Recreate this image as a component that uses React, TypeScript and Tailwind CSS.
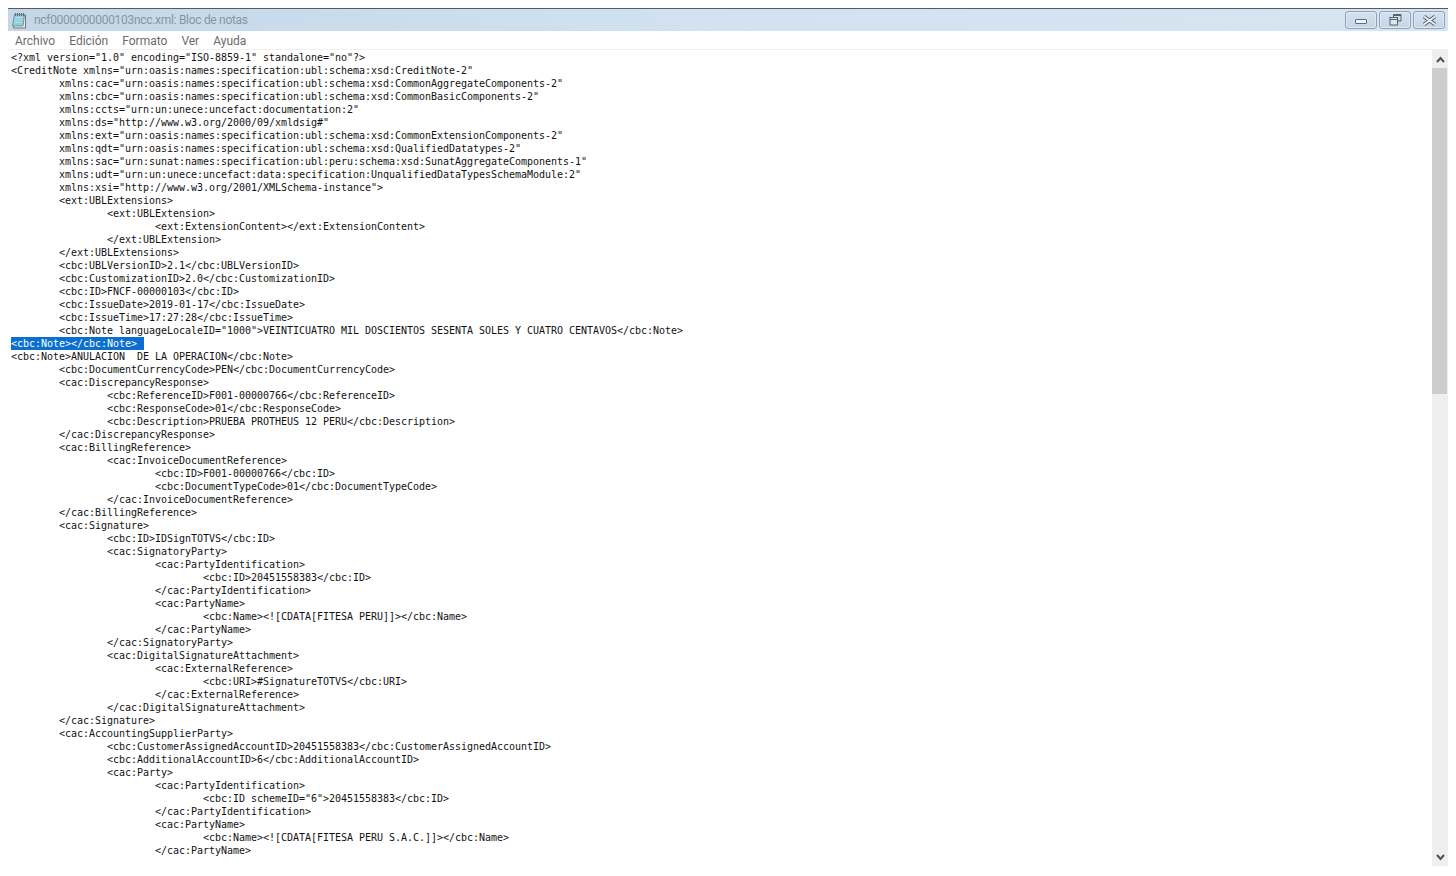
const lines = [
  '<?xml version="1.0" encoding="ISO-8859-1" standalone="no"?>',
  '<CreditNote xmlns="urn:oasis:names:specification:ubl:schema:xsd:CreditNote-2"',
  '\txmlns:cac="urn:oasis:names:specification:ubl:schema:xsd:CommonAggregateComponents-2"',
  '\txmlns:cbc="urn:oasis:names:specification:ubl:schema:xsd:CommonBasicComponents-2"',
  '\txmlns:ccts="urn:un:unece:uncefact:documentation:2"',
  '\txmlns:ds="http://www.w3.org/2000/09/xmldsig#"',
  '\txmlns:ext="urn:oasis:names:specification:ubl:schema:xsd:CommonExtensionComponents-2"',
  '\txmlns:qdt="urn:oasis:names:specification:ubl:schema:xsd:QualifiedDatatypes-2"',
  '\txmlns:sac="urn:sunat:names:specification:ubl:peru:schema:xsd:SunatAggregateComponents-1"',
  '\txmlns:udt="urn:un:unece:uncefact:data:specification:UnqualifiedDataTypesSchemaModule:2"',
  '\txmlns:xsi="http://www.w3.org/2001/XMLSchema-instance">',
  '\t<ext:UBLExtensions>',
  '\t\t<ext:UBLExtension>',
  '\t\t\t<ext:ExtensionContent></ext:ExtensionContent>',
  '\t\t</ext:UBLExtension>',
  '\t</ext:UBLExtensions>',
  '\t<cbc:UBLVersionID>2.1</cbc:UBLVersionID>',
  '\t<cbc:CustomizationID>2.0</cbc:CustomizationID>',
  '\t<cbc:ID>FNCF-00000103</cbc:ID>',
  '\t<cbc:IssueDate>2019-01-17</cbc:IssueDate>',
  '\t<cbc:IssueTime>17:27:28</cbc:IssueTime>',
  '\t<cbc:Note languageLocaleID="1000">VEINTICUATRO MIL DOSCIENTOS SESENTA SOLES Y CUATRO CENTAVOS</cbc:Note>',
  'SELECTED',
  '<cbc:Note>ANULACION  DE LA OPERACION</cbc:Note>',
  '\t<cbc:DocumentCurrencyCode>PEN</cbc:DocumentCurrencyCode>',
  '\t<cac:DiscrepancyResponse>',
  '\t\t<cbc:ReferenceID>F001-00000766</cbc:ReferenceID>',
  '\t\t<cbc:ResponseCode>01</cbc:ResponseCode>',
  '\t\t<cbc:Description>PRUEBA PROTHEUS 12 PERU</cbc:Description>',
  '\t</cac:DiscrepancyResponse>',
  '\t<cac:BillingReference>',
  '\t\t<cac:InvoiceDocumentReference>',
  '\t\t\t<cbc:ID>F001-00000766</cbc:ID>',
  '\t\t\t<cbc:DocumentTypeCode>01</cbc:DocumentTypeCode>',
  '\t\t</cac:InvoiceDocumentReference>',
  '\t</cac:BillingReference>',
  '\t<cac:Signature>',
  '\t\t<cbc:ID>IDSignTOTVS</cbc:ID>',
  '\t\t<cac:SignatoryParty>',
  '\t\t\t<cac:PartyIdentification>',
  '\t\t\t\t<cbc:ID>20451558383</cbc:ID>',
  '\t\t\t</cac:PartyIdentification>',
  '\t\t\t<cac:PartyName>',
  '\t\t\t\t<cbc:Name><![CDATA[FITESA PERU]]></cbc:Name>',
  '\t\t\t</cac:PartyName>',
  '\t\t</cac:SignatoryParty>',
  '\t\t<cac:DigitalSignatureAttachment>',
  '\t\t\t<cac:ExternalReference>',
  '\t\t\t\t<cbc:URI>#SignatureTOTVS</cbc:URI>',
  '\t\t\t</cac:ExternalReference>',
  '\t\t</cac:DigitalSignatureAttachment>',
  '\t</cac:Signature>',
  '\t<cac:AccountingSupplierParty>',
  '\t\t<cbc:CustomerAssignedAccountID>20451558383</cbc:CustomerAssignedAccountID>',
  '\t\t<cbc:AdditionalAccountID>6</cbc:AdditionalAccountID>',
  '\t\t<cac:Party>',
  '\t\t\t<cac:PartyIdentification>',
  '\t\t\t\t<cbc:ID schemeID="6">20451558383</cbc:ID>',
  '\t\t\t</cac:PartyIdentification>',
  '\t\t\t<cac:PartyName>',
  '\t\t\t\t<cbc:Name><![CDATA[FITESA PERU S.A.C.]]></cbc:Name>',
  '\t\t\t</cac:PartyName>',
]

const menu = ['Archivo', 'Edición', 'Formato', 'Ver', 'Ayuda']

function NotepadIcon() {
  return (
    <svg width="17" height="17" viewBox="0 0 17 17" className="shrink-0">
      <path d="M5 3h10.5v13H3.5z" fill="#f4f1dc" stroke="#77736a" />
      <path d="M4.5 2.5h10l-1.5 11.5H2.5z" fill="#8fcbd8" stroke="#6c9aa8" />
      <path d="M5 5.5h8M4.5 8h8M4.2 10.5h8" stroke="#b8e2ea" />
      <path d="M5.5 1v3M7.5 1v3M9.5 1v3M11.5 1v3M13.5 1v3" stroke="#5f6c74" />
    </svg>
  )
}

function CaptionButton({ children }: { children: React.ReactNode }) {
  return (
    <div className="flex h-[18px] w-[32px] items-center justify-center rounded-[3px] border border-[#8ea3b7] bg-gradient-to-b from-[#d4e2ee] to-[#c4d6e7] shadow-[inset_0_0_0_1px_#dfe9f2]">
      {children}
    </div>
  )
}

export default function App() {
  return (
    <div className="h-[876px] w-[1456px] overflow-hidden bg-white px-2 pt-2">
      <div className="flex h-[858px] flex-col">
        <div className="flex h-[23px] shrink-0 items-center justify-between border-t border-[#555b60] bg-gradient-to-r from-[#c3d7e9] via-[#d2e2f0] to-[#d6e5f2] pl-[2px] pr-[3px]">
          <div className="flex items-center gap-[7px]">
            <NotepadIcon />
            <span className="font-['Roboto',sans-serif] text-[12px] tracking-[-0.3px] text-[#8a949c]">
              ncf0000000000103ncc.xml: Bloc de notas
            </span>
          </div>
          <div className="flex gap-[2px]">
            <CaptionButton>
              <div className="mt-[2px] h-[5px] w-[12px] rounded-[1px] border border-[#5f6b76] bg-[#eef3f7]" />
            </CaptionButton>
            <CaptionButton>
              <svg width="13" height="12" viewBox="0 0 13 12" fill="none" stroke="#55616c">
                <path d="M4.5 3V.5h7.5v6.5H9" />
                <path d="M4.5 1.5h7.5" />
                <rect x="1" y="3.5" width="7.5" height="7.5" fill="#dde7f0" />
                <path d="M1 5.5h7.5" />
              </svg>
            </CaptionButton>
            <CaptionButton>
              <svg width="15" height="11" viewBox="0 0 15 11" fill="none">
                <path d="M2 1.5l11 8M13 1.5l-11 8" stroke="#56616b" strokeWidth="3.8" />
                <path d="M2 1.5l11 8M13 1.5l-11 8" stroke="#eef2f6" strokeWidth="1.8" />
              </svg>
            </CaptionButton>
          </div>
        </div>
        <div className="flex h-[19px] shrink-0 items-center gap-[14px] border-b border-[#f0f0f0] pl-[7px] pt-[1px] font-['Roboto',sans-serif] text-[12px] text-[#6b6b6b]">
          {menu.map((m) => (
            <span key={m}>{m}</span>
          ))}
        </div>
        <div className="flex min-h-0 flex-1">
          <pre className="min-w-0 flex-1 overflow-hidden pl-[3px] pt-[1px] font-['DejaVu_Sans_Mono',monospace] text-[10px] leading-[13px] tracking-[-0.02px] text-[#111] [tab-size:8]">
            {lines.map((l, i) =>
              l === 'SELECTED' ? (
                <div key={i} className="h-[13px] w-[133px] bg-[#0a6fd0] text-white">
                  {'<cbc:Note></cbc:Note>'}
                </div>
              ) : (
                <div key={i} className="h-[13px]">
                  {l}
                </div>
              ),
            )}
          </pre>
          <div className="flex w-[16px] shrink-0 flex-col bg-[#efefef]">
            <div className="flex h-[18px] items-center justify-center">
              <svg width="9" height="7" viewBox="0 0 9 7" fill="none" stroke="#505050" strokeWidth="2">
                <path d="M1 6l3.5-4L8 6" />
              </svg>
            </div>
            <div className="h-[326px] w-[15px] bg-[#cdcdcd]" />
            <div className="flex-1" />
            <div className="flex h-[18px] items-center justify-center">
              <svg width="9" height="7" viewBox="0 0 9 7" fill="none" stroke="#505050" strokeWidth="2">
                <path d="M1 1l3.5 4L8 1" />
              </svg>
            </div>
          </div>
        </div>
      </div>
    </div>
  )
}
